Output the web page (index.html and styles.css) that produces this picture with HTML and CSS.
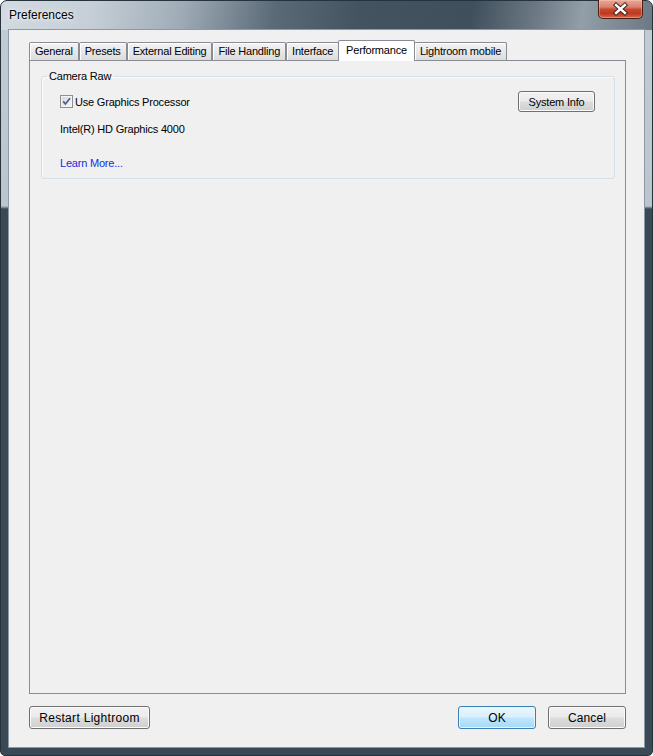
FILE: index.html
```html
<!DOCTYPE html>
<html>
<head>
<meta charset="utf-8">
<title>Preferences</title>
<link rel="stylesheet" href="styles.css">
</head>
<body>
<div class="window">
  <div class="titlebar">
    <span class="title">Preferences</span>
    <button class="close" aria-label="Close">
      <svg width="44" height="18" viewBox="0 0 44 18">
        <path d="M17.5 5 L26.5 13 M26.5 5 L17.5 13" stroke="#3a2018" stroke-width="4.6" stroke-linecap="square" fill="none"/>
        <path d="M17.5 5 L26.5 13 M26.5 5 L17.5 13" stroke="#ffffff" stroke-width="2.6" stroke-linecap="square" fill="none"/>
      </svg>
    </button>
  </div>
  <div class="client">
    <div class="tabs">
      <div class="tab">General</div>
      <div class="tab">Presets</div>
      <div class="tab">External Editing</div>
      <div class="tab">File Handling</div>
      <div class="tab">Interface</div>
      <div class="tab active">Performance</div>
      <div class="tab">Lightroom mobile</div>
    </div>
    <div class="panel">
      <fieldset class="group">
        <legend>Camera Raw</legend>
        <div class="row">
          <label class="check">
            <span class="box">
              <svg width="13" height="13" viewBox="0 0 13 13">
                <defs>
                  <linearGradient id="cb" x1="0" y1="0" x2="1" y2="1">
                    <stop offset="0" stop-color="#d9d9d9"/>
                    <stop offset="1" stop-color="#f6f6f6"/>
                  </linearGradient>
                </defs>
                <rect x="0.5" y="0.5" width="12" height="12" fill="#f4f4f4" stroke="#8e8f8f"/>
                <rect x="2" y="2" width="9" height="9" fill="url(#cb)"/>
                <path d="M3.2 6.4 L5.4 9 L10 3.2" stroke="#4b5f8e" stroke-width="1.7" fill="none"/>
              </svg>
            </span>
            Use Graphics Processor
          </label>
          <button class="btn sysinfo">System Info</button>
        </div>
        <div class="gpu">Intel(R) HD Graphics 4000</div>
        <a class="link" href="#">Learn More...</a>
      </fieldset>
    </div>
    <div class="footer">
      <button class="btn big restart">Restart Lightroom</button>
      <button class="btn big ok">OK</button>
      <button class="btn big cancel">Cancel</button>
    </div>
  </div>
</div>
</body>
</html>
```

FILE: styles.css
```css
html, body {
  margin: 0;
  padding: 0;
}

body {
  width: 653px;
  height: 756px;
  overflow: hidden;
  background: #ffffff;
  font-family: "Liberation Sans", Arial, sans-serif;
  font-size: 11px;
  letter-spacing: -0.2px;
  color: #000;
}

.window {
  box-sizing: border-box;
  width: 653px;
  height: 756px;
  border: 1px solid #26323c;
  border-radius: 7px 7px 5px 5px;
  padding: 0 7px 7px;
  display: flex;
  flex-direction: column;
  background:
    linear-gradient(100deg, #d3dae1 0%, #c6cfd7 14%, #9eabb6 28%, #5a6a77 42%, #43535f 55%, #3f4f5c 72%, #6d7a85 82%, #929ea8 89%, #6b7985 100%) top left / 100% 29px no-repeat,
    linear-gradient(to bottom, #c3ccd3 0px, #bcc5cd 205px, #3a4956 208px, #3a4956 100%);
}

.titlebar {
  height: 28px;
  flex: none;
  display: flex;
  justify-content: space-between;
  align-items: flex-start;
}

.title {
  padding: 7px 0 0 1px;
  font-size: 12px;
  letter-spacing: 0;
  color: #000;
  text-shadow: 0 0 6px rgba(255, 255, 255, 0.9), 0 0 3px rgba(255, 255, 255, 0.7);
}

.close {
  width: 45px;
  height: 19px;
  margin: -1px 2px 0 0;
  padding: 0;
  box-sizing: border-box;
  border: 1px solid #4e1e15;
  border-top: none;
  border-radius: 0 0 5px 5px;
  background: linear-gradient(#e9a695 0%, #d98470 38%, #c84830 52%, #c03820 75%, #cf6a50 100%);
  box-shadow: inset 0 0 0 1px rgba(255, 220, 210, 0.35);
  display: flex;
  align-items: center;
  justify-content: center;
}

.close svg {
  display: block;
}

.client {
  flex: 1;
  border: 1px solid #8d99a4;
  background: #f0f0f0;
  display: flex;
  flex-direction: column;
  padding: 10px 18px 0 20px;
}

.tabs {
  position: relative;
  z-index: 1;
  display: flex;
  align-items: flex-end;
  height: 21px;
  margin-bottom: -1px;
}

.tab {
  box-sizing: border-box;
  height: 18px;
  margin-bottom: 1px;
  padding: 0 5px;
  line-height: 17px;
  border: 1px solid #898c95;
  border-bottom: none;
  border-radius: 2px 2px 0 0;
  background: linear-gradient(#f3f3f3 0%, #e8e8e8 50%, #dcdcdc 100%);
  box-shadow: inset 1px 1px 0 #ffffff;
  white-space: nowrap;
}

.tab.active {
  height: 21px;
  margin: 0 -1px;
  padding: 0 7px;
  line-height: 18px;
  background: #ffffff;
  box-shadow: none;
  z-index: 2;
}

.panel {
  flex: none;
  box-sizing: border-box;
  height: 634px;
  border: 1px solid #898c95;
  background: #f0f0f0;
  padding-top: 9px;
}

.group {
  margin: 0 10px 0 11px;
  padding: 0 19px 8px 18px;
  border: 1px solid #d5dfe5;
  border-radius: 3px;
  box-shadow: inset 1px 1px 0 #fbfcfd;
}

.group legend {
  margin-left: -13px;
  padding: 0 2px;
  line-height: 13px;
}

.row {
  display: flex;
  justify-content: space-between;
  align-items: center;
  margin-top: 8px;
}

.check {
  display: flex;
  align-items: center;
  gap: 2px;
}

.box {
  display: block;
  width: 13px;
  height: 13px;
}

.box svg {
  display: block;
}

.btn {
  box-sizing: border-box;
  padding: 0;
  border: 1px solid #707070;
  border-radius: 3px;
  background: linear-gradient(#f2f2f2 0%, #ebebeb 48%, #dddddd 52%, #cfcfcf 100%);
  box-shadow: inset 0 0 0 1px #fbfbfb;
  font-family: "Liberation Sans", Arial, sans-serif;
  font-size: 11px;
  letter-spacing: -0.2px;
  color: #000;
}

.sysinfo {
  width: 77px;
  height: 21px;
}

.gpu {
  margin-top: 11px;
  line-height: 13px;
}

.link {
  display: inline-block;
  margin-top: 21px;
  line-height: 13px;
  color: #0f2fe0;
  text-decoration: none;
}

.footer {
  display: flex;
  gap: 12px;
  margin-top: 12px;
}

.big {
  height: 23px;
  font-size: 12px;
  letter-spacing: 0.1px;
}

.restart {
  width: 121px;
  letter-spacing: 0.3px;
}

.ok {
  width: 78px;
  margin-left: auto;
  border-color: #3c7fb1;
  background: linear-gradient(#eaf6fd 0%, #d9f0fc 48%, #bee6fd 52%, #a7d9f5 100%);
  box-shadow: inset 0 0 0 1px #e6f4fc;
}

.cancel {
  width: 78px;
}
```
